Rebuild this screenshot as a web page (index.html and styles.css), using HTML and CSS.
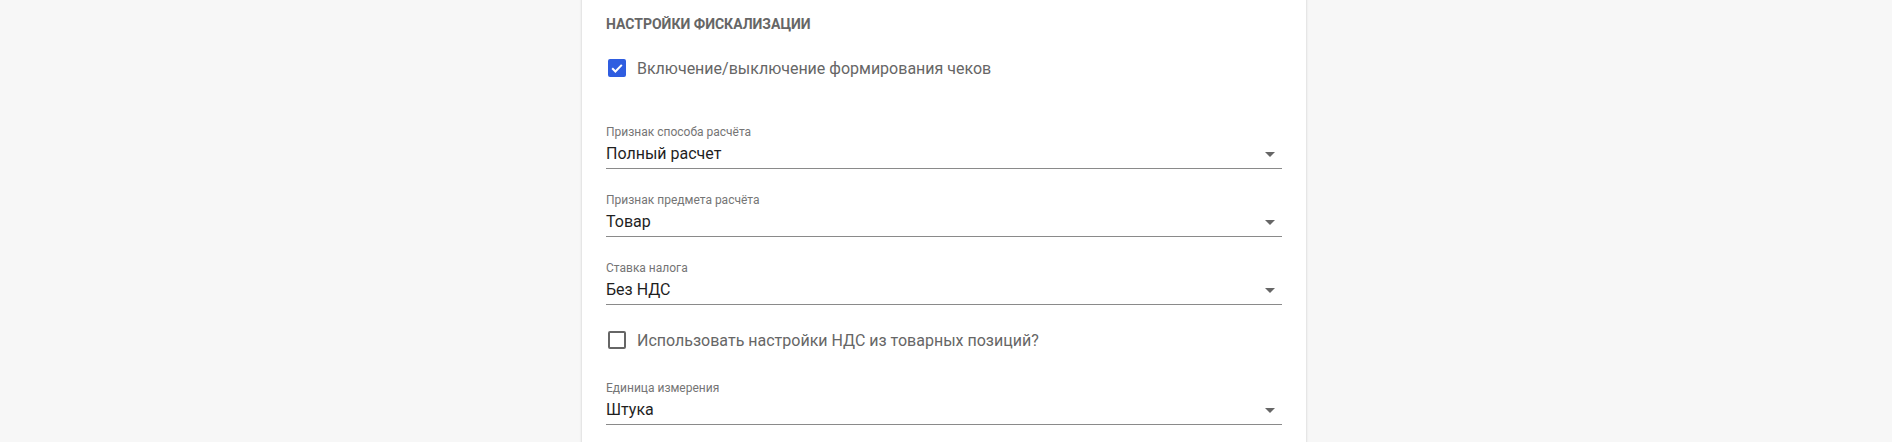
FILE: index.html
```html
<!DOCTYPE html>
<html lang="ru">
<head>
<meta charset="utf-8">
<title>Настройки фискализации</title>
<link rel="stylesheet" href="styles.css">
</head>
<body>
<div class="page">
  <section class="card">
    <h2 class="heading">Настройки фискализации</h2>

    <label class="check-row check-row--first">
      <span class="box box--checked">
        <svg viewBox="0 0 18 18" width="18" height="18"><path d="M4.2 9.3l3.2 3.2 6.4-6.6" fill="none" stroke="#fff" stroke-width="2"/></svg>
      </span>
      <span class="check-label">Включение/выключение формирования чеков</span>
    </label>

    <div class="field field--first">
      <div class="field-label">Признак способа расчёта</div>
      <div class="field-control">
        <span class="field-value">Полный расчет</span>
        <span class="arrow"></span>
      </div>
    </div>

    <div class="field">
      <div class="field-label">Признак предмета расчёта</div>
      <div class="field-control">
        <span class="field-value">Товар</span>
        <span class="arrow"></span>
      </div>
    </div>

    <div class="field">
      <div class="field-label">Ставка налога</div>
      <div class="field-control">
        <span class="field-value">Без НДС</span>
        <span class="arrow"></span>
      </div>
    </div>

    <label class="check-row check-row--second">
      <span class="box"></span>
      <span class="check-label">Использовать настройки НДС из товарных позиций?</span>
    </label>

    <div class="field field--after-check">
      <div class="field-label">Единица измерения</div>
      <div class="field-control">
        <span class="field-value">Штука</span>
        <span class="arrow"></span>
      </div>
    </div>
  </section>
</div>
</body>
</html>
```

FILE: styles.css
```css
html, body {
  margin: 0;
  padding: 0;
  height: 100%;
  background: #f7f7f7;
  overflow: hidden;
}

body {
  font-family: Roboto, "Liberation Sans", Arial, sans-serif;
}

.page {
  display: flex;
  justify-content: center;
  padding-right: 4px;
  height: 100%;
}

.card {
  width: 724px;
  box-sizing: border-box;
  background: #fff;
  padding: 14px 24px 0;
  box-shadow: 0 0 3px rgba(0, 0, 0, 0.12), 0 1px 2px rgba(0, 0, 0, 0.08);
  margin-top: -4px;
  padding-top: 18px;
  min-height: 460px;
}

.heading {
  margin: 0;
  font-size: 14px;
  line-height: 20px;
  font-weight: 700;
  color: #666;
  text-transform: uppercase;
}

.check-row {
  display: flex;
  align-items: center;
  height: 30px;
  padding-left: 2px;
}

.check-row--first {
  margin-top: 19px;
}

.check-row--second {
  margin-top: 20px;
}

.box {
  width: 18px;
  height: 18px;
  box-sizing: border-box;
  border: 2px solid #666;
  border-radius: 2px;
  flex: none;
  display: flex;
  align-items: center;
  justify-content: center;
}

.box--checked {
  background: #2f5de0;
  border-color: #2f5de0;
}

.box--checked svg {
  flex: none;
}

.check-label {
  margin-left: 11px;
  font-size: 16px;
  line-height: 19px;
  color: #666;
}

.field {
  margin-top: 24px;
}

.field--first {
  margin-top: 42px;
}

.field--after-check {
  margin-top: 26px;
}

.field-label {
  font-size: 12px;
  line-height: 15px;
  color: #757575;
}

.field-control {
  display: flex;
  align-items: center;
  justify-content: space-between;
  padding: 4px 0 5px;
  border-bottom: 1px solid #8a8a8a;
}

.field-value {
  font-size: 16px;
  line-height: 19px;
  color: #1f1f1f;
}

.arrow {
  width: 0;
  height: 0;
  border-left: 5px solid transparent;
  border-right: 5px solid transparent;
  border-top: 5px solid #666;
  margin-right: 7px;
  margin-top: 2px;
}
```
